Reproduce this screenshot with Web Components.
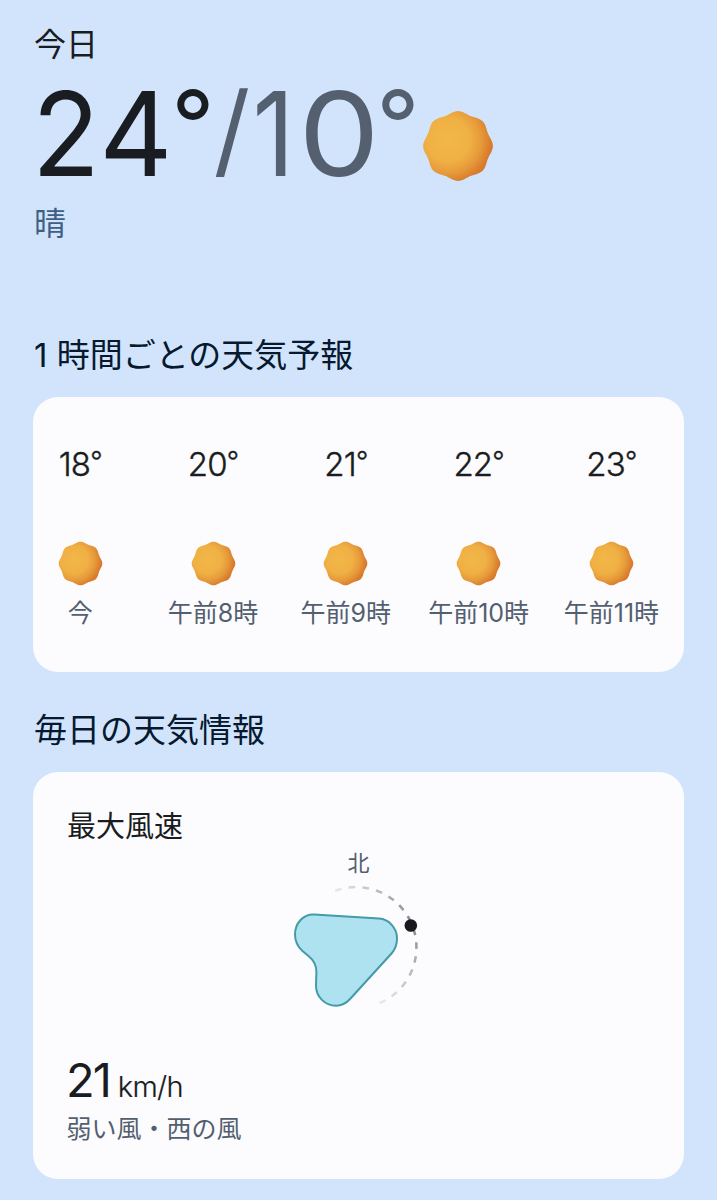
<!DOCTYPE html>
<html lang="ja">
<head>
<meta charset="utf-8">
<title>天気</title>
<style>
  body {
    margin: 0;
    background: #d2e4fc;
    font-family: "Inter", "Noto Sans CJK JP", sans-serif;
    color: #191c20;
  }
</style>
</head>
<body>
<weather-app>
  <current-weather slot="current" high="24" low="10">
    <span slot="day">今日</span>
    <span slot="condition">晴</span>
  </current-weather>

  <weather-section>
    <span slot="title">1 時間ごとの天気予報</span>
    <hourly-list>
      <hour-item temp="18">今</hour-item>
      <hour-item temp="20">午前8時</hour-item>
      <hour-item temp="21">午前9時</hour-item>
      <hour-item temp="22">午前10時</hour-item>
      <hour-item temp="23">午前11時</hour-item>
    </hourly-list>
  </weather-section>

  <weather-section>
    <span slot="title">毎日の天気情報</span>
    <wind-card speed="21" unit="km/h">
      <span slot="title">最大風速</span>
      <span slot="north">北</span>
      <span slot="summary">弱い風・西の風</span>
    </wind-card>
  </weather-section>
</weather-app>

<script>
class WeatherApp extends HTMLElement {
  constructor() {
    super();
    this.attachShadow({ mode: "open" }).innerHTML = `
      <style>
        :host {
          display: block;
          box-sizing: border-box;
          height: 1200px;
          padding: 20px 33px 0;
          overflow: hidden;
        }
      </style>
      <slot name="current"></slot>
      <slot></slot>
    `;
  }
}

class SunIcon extends HTMLElement {
  constructor() {
    super();
    this.attachShadow({ mode: "open" });
  }

  // round outline with eight soft bumps
  outline() {
    const points = [];
    for (let a = 0; a < 360; a += 3) {
      const t = (a * Math.PI) / 180;
      const r = 33.7 + 1.2 * Math.cos(8 * t);
      points.push(`${(36 + r * Math.cos(t)).toFixed(2)} ${(36 + r * Math.sin(t)).toFixed(2)}`);
    }
    return `M${points.join("L")}Z`;
  }

  connectedCallback() {
    this.shadowRoot.innerHTML = `
      <style>
        :host {
          display: block;
          width: 72px;
          height: 72px;
        }

        svg {
          display: block;
          width: 100%;
          height: 100%;
        }
      </style>
      <svg viewBox="0 0 72 72">
        <defs>
          <radialGradient id="g" gradientUnits="userSpaceOnUse" cx="26" cy="30" r="49">
            <stop offset="0" stop-color="#f2b748"/>
            <stop offset="0.45" stop-color="#f0b044"/>
            <stop offset="0.68" stop-color="#e69a3a"/>
            <stop offset="0.88" stop-color="#d97b2c"/>
            <stop offset="1" stop-color="#d7732a"/>
          </radialGradient>
        </defs>
        <path d="${this.outline()}" fill="url(#g)"/>
      </svg>
    `;
  }
}

class CurrentWeather extends HTMLElement {
  constructor() {
    super();
    this.attachShadow({ mode: "open" });
  }

  // [cell width, horizontal scale] for each character of the big reading
  static cells = {
    "2": [64, 0.95],
    "4": [76, 0.97],
    "1": [43, 0.88],
    "0": [88, 1.1],
  };

  digits(value) {
    return [...value]
      .map((d) => {
        const [width, scale] = CurrentWeather.cells[d] || [70, 1];
        return `<span class="cell" style="width:${width}px;transform:scaleX(${scale})">${d}</span>`;
      })
      .join("");
  }

  connectedCallback() {
    this.shadowRoot.innerHTML = `
      <style>
        :host {
          display: block;
          height: 311px;
          padding-left: 1px;
        }

        .day, .condition {
          font-size: 32px;
          line-height: 48px;
        }

        .day {
          height: 48px;
          line-height: 50px;
        }

        .row {
          display: flex;
          height: 132px;
        }

        .temp {
          display: flex;
          width: 388px;
          font-size: 117px;
          line-height: 132px;
          white-space: nowrap;
        }

        .low {
          display: flex;
          color: #54606f;
        }

        .cell {
          display: flex;
          justify-content: center;
        }

        .degree {
          width: 38px;
          font-size: 95px;
          line-height: 113px;
        }

        .slash {
          width: 40px;
          font-size: 102px;
          line-height: 122px;
        }

        sun-icon {
          margin-top: 42px;
        }

        .condition {
          color: #3f6084;
          line-height: 47px;
        }
      </style>
      <div class="day"><slot name="day"></slot></div>
      <div class="row">
        <div class="temp">${this.digits(this.getAttribute("high"))}<span class="cell degree">°</span><span class="low"><span class="cell slash">/</span>${this.digits(this.getAttribute("low"))}<span class="cell degree" style="width:30px">°</span></span></div>
        <sun-icon></sun-icon>
      </div>
      <div class="condition"><slot name="condition"></slot></div>
    `;
  }
}

class WeatherSection extends HTMLElement {
  constructor() {
    super();
    this.attachShadow({ mode: "open" }).innerHTML = `
      <style>
        :host {
          display: block;
          margin-bottom: 34px;
        }

        h2 {
          height: 48px;
          margin: 0 0 18px;
          padding-left: 1px;
          color: #06192f;
          font-size: 33px;
          font-weight: 400;
          line-height: 48px;
          white-space: nowrap;
        }
      </style>
      <h2><slot name="title"></slot></h2>
      <slot></slot>
    `;
  }
}

class HourlyList extends HTMLElement {
  constructor() {
    super();
    this.attachShadow({ mode: "open" }).innerHTML = `
      <style>
        :host {
          display: block;
          height: 275px;
          border-radius: 25px;
          background: #fcfcff;
          overflow: hidden;
        }

        .hours {
          display: grid;
          grid-template-columns: repeat(5, 132.8px);
          margin-left: -19.2px;
          padding-top: 46px;
        }
      </style>
      <div class="hours"><slot></slot></div>
    `;
  }
}

class HourItem extends HTMLElement {
  constructor() {
    super();
    this.attachShadow({ mode: "open" });
  }

  connectedCallback() {
    this.shadowRoot.innerHTML = `
      <style>
        :host {
          display: flex;
          flex-direction: column;
          align-items: center;
          white-space: nowrap;
        }

        .temp {
          height: 98px;
          font-size: 33px;
          font-weight: 350;
          line-height: 42px;
          letter-spacing: -0.8px;
          -webkit-text-stroke: 0.4px;
        }

        .degree {
          font-size: 27px;
          line-height: 1;
          vertical-align: 5px;
        }

        sun-icon {
          width: 45px;
          height: 45px;
        }

        .time {
          margin-top: 9px;
          color: #535f6e;
          font-size: 25px;
          line-height: 36px;
        }
      </style>
      <div class="temp">${this.getAttribute("temp")}<span class="degree">°</span></div>
      <sun-icon></sun-icon>
      <div class="time"><slot></slot></div>
    `;
  }
}

class WindCompass extends HTMLElement {
  constructor() {
    super();
    this.attachShadow({ mode: "open" });
  }

  // dashes fade out away from the marker dot
  dashes() {
    let out = "";
    for (let i = 0; i < 14; i++) {
      const angle = -107 + i * 13.15;
      const opacity = Math.max(0.12, 1 - Math.abs(angle + 22) / 105);
      out += `<path d="M60.4 -3.3V3.3" transform="rotate(${angle})" opacity="${opacity.toFixed(2)}"/>`;
    }
    return out;
  }

  connectedCallback() {
    this.shadowRoot.innerHTML = `
      <style>
        :host {
          display: block;
          width: 140px;
          height: 132px;
        }

        svg {
          display: block;
        }
      </style>
      <svg width="140" height="132" viewBox="289 880 140 132">
        <g transform="translate(356 947.5)" fill="none" stroke="#85868a" stroke-width="2.5">${this.dashes()}</g>
        <path d="M314 914.4L379 918.6C389 919.2 397 928 397 938.5C397 944 395.5 949 391.5 953.5L350.5 998.5C346.5 1003 342 1005.7 336 1005.7C325 1005.7 316 997 316 985.5L316.4 972C316.4 965 313.5 960 308.5 956L302.5 951C297.5 946.5 295 941 295 934.5C295 923 303.5 914 314 914.4Z" fill="#aee2f1" stroke="#439ba8" stroke-width="2"/>
        <circle cx="410.8" cy="925.5" r="6.3" fill="#191a1d"/>
      </svg>
    `;
  }
}

class WindCard extends HTMLElement {
  constructor() {
    super();
    this.attachShadow({ mode: "open" });
  }

  connectedCallback() {
    this.shadowRoot.innerHTML = `
      <style>
        :host {
          display: flex;
          flex-direction: column;
          box-sizing: border-box;
          height: 407px;
          padding: 35px 34px;
          border-radius: 25px;
          background: #fcfcff;
        }

        .title {
          font-size: 29px;
          line-height: 40px;
        }

        .compass {
          display: flex;
          flex-direction: column;
          align-items: center;
        }

        .north {
          color: #535f6e;
          font-size: 22px;
          line-height: 33px;
        }

        .speed {
          margin: 40px 0 0 -1px;
          font-size: 47px;
          line-height: 56px;
          letter-spacing: -2px;
          white-space: nowrap;
        }

        .unit {
          margin-left: 8px;
          font-size: 29px;
          font-weight: 350;
          letter-spacing: -0.7px;
          -webkit-text-stroke: 0.2px;
        }

        .summary {
          margin: -4px 0 0 -0.5px;
          color: #535f6e;
          font-size: 25px;
          line-height: 36px;
        }
      </style>
      <div class="title"><slot name="title"></slot></div>
      <div class="compass">
        <div class="north"><slot name="north"></slot></div>
        <wind-compass></wind-compass>
      </div>
      <div class="speed">${this.getAttribute("speed")}<span class="unit">${this.getAttribute("unit")}</span></div>
      <div class="summary"><slot name="summary"></slot></div>
    `;
  }
}

customElements.define("weather-app", WeatherApp);
customElements.define("sun-icon", SunIcon);
customElements.define("current-weather", CurrentWeather);
customElements.define("weather-section", WeatherSection);
customElements.define("hourly-list", HourlyList);
customElements.define("hour-item", HourItem);
customElements.define("wind-compass", WindCompass);
customElements.define("wind-card", WindCard);
</script>
</body>
</html>
